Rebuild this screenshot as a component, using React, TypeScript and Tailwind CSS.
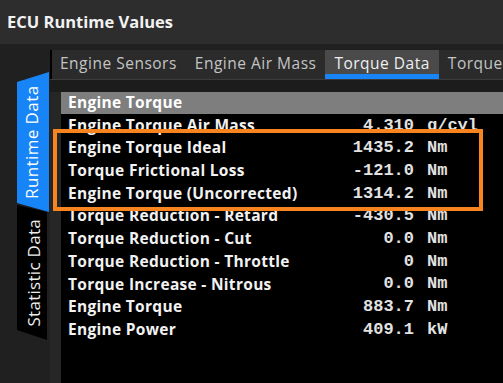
const rows = [
  { label: 'Engine Torque Air Mass', value: '4.310', unit: 'g/cyl' },
  { label: 'Engine Torque Ideal', value: '1435.2', unit: 'Nm' },
  { label: 'Torque Frictional Loss', value: '-121.0', unit: 'Nm' },
  { label: 'Engine Torque (Uncorrected)', value: '1314.2', unit: 'Nm' },
  { label: 'Torque Reduction - Retard', value: '-430.5', unit: 'Nm' },
  { label: 'Torque Reduction - Cut', value: '0.0', unit: 'Nm' },
  { label: 'Torque Reduction - Throttle', value: '0', unit: 'Nm' },
  { label: 'Torque Increase - Nitrous', value: '0.0', unit: 'Nm' },
  { label: 'Engine Torque', value: '883.7', unit: 'Nm' },
  { label: 'Engine Power', value: '409.1', unit: 'kW' },
];

const tabs = ['Engine Sensors', 'Engine Air Mass', 'Torque Data', 'Torque'];

export default function App() {
  return (
    <div className="relative w-[503px] h-[383px] overflow-hidden bg-[#202020] flex flex-col font-['Open_Sans','Noto_Sans',sans-serif]">
      <div className="h-[44px] shrink-0 bg-[#2d2d2d] flex items-center pl-[7px] text-[16.5px] font-bold text-[#f2f2f2]">
        ECU Runtime Values
      </div>

      <div className="flex-1 flex min-h-0">
        {/* vertical side tabs */}
        <div className="w-[50px] shrink-0 flex flex-col pt-[28px] pl-[17px]">
          <div className="w-[32px] h-[140px] bg-[#1784f7] flex items-center justify-center [clip-path:polygon(0_10px,100%_0,100%_100%,0_131px)]">
            <span className="-rotate-90 whitespace-nowrap text-[17px] tracking-[0.4px] text-white pb-[1px]">Runtime Data</span>
          </div>
          <div className="-mt-[7px] w-[30px] h-[135px] bg-black flex items-center justify-center [clip-path:polygon(0_0,100%_7px,100%_100%,0_125px)]">
            <span className="-rotate-90 whitespace-nowrap text-[17px] tracking-[0.3px] text-[#eeeeee] pt-[4px]">Statistic Data</span>
          </div>
        </div>

        <div className="flex-1 min-w-0 flex flex-col pt-[6px]">
          <div className="h-[29px] shrink-0 bg-[#2b2b2b] border-l-2 border-black flex items-stretch overflow-hidden text-[15.5px] tracking-[0.5px] text-[#c4c4c4] whitespace-nowrap">
            {tabs.map((t) => {
              const active = t === 'Torque Data';
              return (
                <div
                  key={t}
                  className={
                    active
                      ? 'shrink-0 px-[9px] flex items-center bg-[#4a4a4a] text-[#f0f0f0] border-b-[5px] border-[#1784f7] pt-[4px]'
                      : 'shrink-0 first:pl-[8px] px-[9px] flex items-center pb-[1px]'
                  }
                >
                  {t}
                </div>
              );
            })}
          </div>
          <div className="h-[1px] shrink-0 bg-[#3c3c3c]" />
          <div className="flex-1 flex flex-col bg-[#262626] pl-[11px]">
            <div className="h-[12px] -ml-[11px] bg-[#1c1c1c] shrink-0" />
            <div className="flex-1 bg-black text-[#f2f2f2]">
              <div className="h-[22px] bg-[#7e7e7e] flex items-center pl-[7px] text-[15.5px] tracking-[0.3px] font-bold text-white">
                Engine Torque
              </div>
              {rows.map((r) => (
                <div key={r.label} className="h-[22.7px] flex items-center pl-[7px]">
                  <span className="w-[280px] shrink-0 text-[15.5px] tracking-[0.3px] font-bold">{r.label}</span>
                  <span className="w-[66px] shrink-0 text-right font-['Liberation_Mono',monospace] text-[17px] font-bold text-[#e2e2e2]">
                    {r.value}
                  </span>
                  <span className="ml-[13px] font-['Liberation_Mono',monospace] text-[17px] font-bold text-[#e2e2e2]">
                    {r.unit}
                  </span>
                </div>
              ))}
            </div>
          </div>
        </div>
      </div>

      {/* highlight annotation */}
      <div className="absolute left-[53px] top-[129px] w-[430px] h-[82px] border-4 border-[#f7841f] pointer-events-none" />
    </div>
  );
}
